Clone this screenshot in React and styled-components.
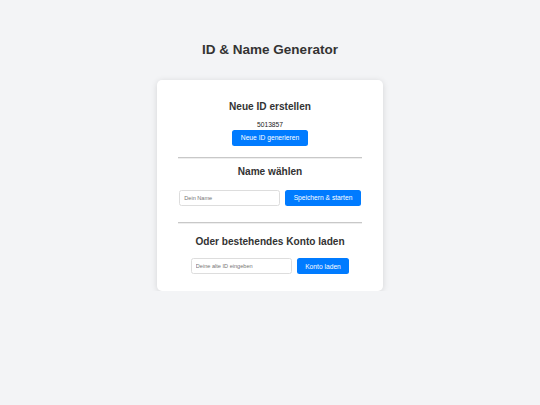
import React, { useState } from 'react'
import styled, { createGlobalStyle } from 'styled-components'

const GlobalStyle = createGlobalStyle`
    html, body {
        margin: 0;
        padding: 0;
        background: #f3f4f6;
        font-family: 'Liberation Sans', Arial, sans-serif;
        color: #333;
    }
`

const Page = styled.div`
    padding-top: 42px;
    display: flex;
    flex-direction: column;
    align-items: center;
`

const Title = styled.h1`
    margin: 0 0 22px;
    font-size: 13.5px;
    line-height: 15.5px;
    font-weight: bold;
    color: #333;
`

const Card = styled.div`
    width: 226px;
    box-sizing: border-box;
    padding: 21px 21px 17px;
    background: #fff;
    border-radius: 5px;
    box-shadow: 0 1px 6px rgba(0, 0, 0, 0.13);
    display: flex;
    flex-direction: column;
    align-items: center;
`

const Heading = styled.h2`
    margin: ${p => p.$top || 0}px 0 ${p => p.$bottom || 0}px;
    font-size: 10.1px;
    line-height: 11.5px;
    font-weight: bold;
    color: #333;
`

const IdText = styled.div`
    margin: 8.5px 0 2px;
    font-size: 6.7px;
    line-height: 7.7px;
    color: #222;
`

const Button = styled.button`
    border: none;
    border-radius: 2.5px;
    background: #007bff;
    color: #fff;
    font-family: 'Liberation Sans', Arial, sans-serif;
    font-size: 6.7px;
    line-height: 7.7px;
    padding: 4.2px 8.4px;
    cursor: pointer;
    white-space: nowrap;
`

const Divider = styled.hr`
    width: 100%;
    margin: ${p => p.$top}px 0 0;
    border: none;
    border-top: 1px solid #c8c8c8;
    border-bottom: 1px solid #eee;
    height: 0;
`

const Row = styled.div`
    display: flex;
    justify-content: center;
    align-items: center;
    gap: 5px;
    width: 100%;
`

const Input = styled.input`
    width: 101px;
    height: 16px;
    box-sizing: border-box;
    padding: 0 4px;
    border: 1px solid #ddd;
    border-radius: 2.5px;
    font-family: 'Liberation Sans', Arial, sans-serif;
    font-size: 5.6px;
    color: #333;
    outline: none;

    ::placeholder {
        color: #777;
    }
`

export default function App() {
    const [id, setId] = useState('5013857')

    const generate = () => {
        setId(String(Math.floor(1000000 + Math.random() * 9000000)))
    }

    return (
        <Page>
            <GlobalStyle />
            <Title>ID &amp; Name Generator</Title>
            <Card>
                <Heading>Neue ID erstellen</Heading>
                <IdText>{id}</IdText>
                <Button onClick={generate}>Neue ID generieren</Button>

                <Divider $top={11} />

                <Heading $top={7} $bottom={12}>Name wählen</Heading>
                <Row>
                    <Input placeholder='Dein Name' />
                    <Button>Speichern &amp; starten</Button>
                </Row>

                <Divider $top={16} />

                <Heading $top={12} $bottom={11}>Oder bestehendes Konto laden</Heading>
                <Row>
                    <Input placeholder='Deine alte ID eingeben' />
                    <Button>Konto laden</Button>
                </Row>
            </Card>
        </Page>
    )
}
